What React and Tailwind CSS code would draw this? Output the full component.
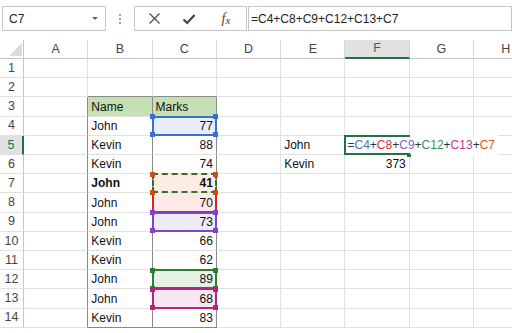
import React from "react";

const COLS = ["A", "B", "C", "D", "E", "F", "G", "H"];

const DATA = {
  3: ["Name", "Marks"],
  4: ["John", "77"],
  5: ["Kevin", "88"],
  6: ["Kevin", "74"],
  7: ["John", "41"],
  8: ["John", "70"],
  9: ["John", "73"],
  10: ["Kevin", "66"],
  11: ["Kevin", "62"],
  12: ["John", "89"],
  13: ["John", "68"],
  14: ["Kevin", "83"],
};

const REFS = {
  4: { fill: "bg-[#e8eef9]", border: "border-2 border-[#3b6fd2]", handle: "bg-[#3b6fd2]", z: "z-10" },
  7: { fill: "bg-[#fbede4]", border: "border-2 border-dashed border-[#3e6b2c]", handle: "bg-[#c4501a]", z: "z-30" },
  8: { fill: "bg-[#fce9e8]", border: "border-2 border-t-0 border-[#d42424]", handle: null, z: "z-10" },
  9: { fill: "bg-[#efeaf7]", border: "border-2 border-[#8044c8]", handle: "bg-[#8044c8]", z: "z-20" },
  12: { fill: "bg-[#e6f2e3]", border: "border-2 border-[#2e7d32]", handle: "bg-[#2e7d32]", z: "z-10" },
  13: { fill: "bg-[#f7e7f0]", border: "border-2 border-[#b3247c]", handle: "bg-[#b3247c]", z: "z-20" },
};

function Handles({ cls }) {
  return (
    <>
      <span className={`absolute -top-[3.5px] -left-[3.5px] w-[5px] h-[5px] ${cls}`} />
      <span className={`absolute -top-[3.5px] -right-[3.5px] w-[5px] h-[5px] ${cls}`} />
      <span className={`absolute -bottom-[3.5px] -left-[3.5px] w-[5px] h-[5px] ${cls}`} />
      <span className={`absolute -bottom-[3.5px] -right-[3.5px] w-[5px] h-[5px] ${cls}`} />
    </>
  );
}

function Formula() {
  return (
    <>
      <span className="text-[#333]">=</span>
      <span className="text-[#4472c4]">C4</span>
      <span className="text-[#333]">+</span>
      <span className="text-[#d6303c]">C8</span>
      <span className="text-[#333]">+</span>
      <span className="text-[#8e5cc8]">C9</span>
      <span className="text-[#333]">+</span>
      <span className="text-[#2f9455]">C12</span>
      <span className="text-[#333]">+</span>
      <span className="text-[#c2369a]">C13</span>
      <span className="text-[#333]">+</span>
      <span className="text-[#d9572b]">C7</span>
    </>
  );
}

function DataCell({ r, c }) {
  const inTableCols = c >= 1 && c <= 3;
  const rightDark = r >= 3 && r <= 14 && inTableCols;
  const bottomDark = (c === 2 || c === 3) && (r === 2 || r === 14);
  const rc = rightDark ? "border-r-[#8a8a8a]" : "border-r-[#e1e1e1]";
  const bc = bottomDark ? "border-b-[#8a8a8a]" : "border-b-[#e1e1e1]";

  let content = null;
  let align = "justify-start pl-[3px]";
  let extra = "";
  let overlay = null;
  let bold = r === 7 && (c === 2 || c === 3);

  if (DATA[r] && c === 2) content = DATA[r][0];
  if (DATA[r] && c === 3) {
    content = DATA[r][1];
    if (r !== 3) align = "justify-end pr-[3px]";
  }
  if (r === 3 && (c === 2 || c === 3)) extra = "bg-[#c6e0b4]";
  if (c === 3 && REFS[r]) {
    const ref = REFS[r];
    extra = ref.fill;
    overlay = (
      <div className={`absolute -top-[1px] -left-[1px] -right-[1px] -bottom-[1px] ${ref.border} ${ref.z}`}>
        {ref.handle && <Handles cls={ref.handle} />}
      </div>
    );
  }
  if (c === 5 && r === 5) content = "John";
  if (c === 5 && r === 6) content = "Kevin";
  if (c === 6 && r === 6) {
    content = "373";
    align = "justify-end pr-[3px]";
  }
  if (c === 6 && r === 5) {
    overlay = (
      <>
        <div className="absolute -top-[1px] -left-[1px] -bottom-[1px] w-[154px] bg-white z-30 flex items-center pl-[3px] whitespace-nowrap">
          <Formula />
        </div>
        <div className="absolute -top-[1px] -left-[1px] -right-[1px] -bottom-[1px] border-2 border-r-0 border-[#217346] z-40" />
        <span className="absolute -bottom-[3px] -right-[2px] w-[4px] h-[3px] bg-[#217346] z-40" />
      </>
    );
  }

  return (
    <div
      className={`relative border-r border-b ${rc} ${bc} ${extra} flex items-center ${align} whitespace-nowrap text-[12px] leading-none text-[#111] ${bold ? "font-bold" : ""}`}
    >
      {content}
      {overlay}
    </div>
  );
}

export default function App() {
  const rows = Array.from({ length: 14 }, (_, i) => i + 1);
  return (
    <div
      className="w-[512px] h-[333px] overflow-hidden bg-white"
      style={{ fontFamily: '"Liberation Sans", Arial, sans-serif' }}
    >
      {/* Formula bar */}
      <div className="h-[40px] flex items-start pt-[6px] pl-[2px]">
        <div className="w-[104px] h-[25px] border border-[#c6c6c6] flex items-center justify-between pl-[6px] pr-[7px] text-[12px] text-[#222]">
          <span>C7</span>
          <span className="w-0 h-0 border-l-[3px] border-r-[3px] border-t-[3px] border-l-transparent border-r-transparent border-t-[#666]" />
        </div>
        <div className="w-[28px] h-[25px] flex flex-col items-center justify-center gap-[2px]">
          <span className="w-[2px] h-[2px] bg-[#a0a0a0]" />
          <span className="w-[2px] h-[2px] bg-[#a0a0a0]" />
          <span className="w-[2px] h-[2px] bg-[#a0a0a0]" />
        </div>
        <div className="w-[113px] h-[25px] border border-[#c6c6c6] flex items-center">
          <div className="w-[36px] flex justify-center pl-[2px]">
            <svg width="13" height="13" viewBox="0 0 13 13">
              <path d="M1.5 1.5 L11.5 11.5 M11.5 1.5 L1.5 11.5" stroke="#555" strokeWidth="1.4" fill="none" />
            </svg>
          </div>
          <div className="w-[36px] flex justify-center">
            <svg width="14" height="12" viewBox="0 0 14 12">
              <path d="M1.5 6.5 L5.2 10 L12.5 2" stroke="#444" strokeWidth="2.2" fill="none" />
            </svg>
          </div>
          <div
            className="w-[38px] flex justify-center text-[14px] italic text-[#444] leading-none"
            style={{ fontFamily: '"Liberation Serif", "Times New Roman", serif' }}
          >
            f<span className="text-[11px] self-end">x</span>
          </div>
        </div>
        <div className="flex-1 h-[25px] border border-[#c6c6c6] ml-[1px] flex items-center pl-[2px] text-[12px] text-[#222] whitespace-nowrap">
          =C4+C8+C9+C12+C13+C7
        </div>
      </div>

      {/* Grid */}
      <div className="grid grid-cols-[24px_repeat(8,64.3px)] grid-rows-[19px_repeat(14,19.21px)] text-[#444]">
        <div className="relative border-r border-b border-r-[#c6c6c6] border-b-[#c6c6c6] bg-white">
          <svg className="absolute right-[1px] bottom-[2px]" width="13" height="13" viewBox="0 0 13 13">
            <polygon points="13,0 13,13 0,13" fill="#dcdcdc" />
          </svg>
        </div>
        {COLS.map((col) => (
          <div
            key={col}
            className={`flex items-center justify-center text-[12.5px] leading-none border-r border-r-[#d8d8d8] ${
              col === "F"
                ? "bg-[#e1e1e1] border-b-2 border-b-[#217346] text-[#217346]"
                : "bg-white border-b border-b-[#c6c6c6]"
            }`}
          >
            {col}
          </div>
        ))}
        {rows.map((r) => (
          <React.Fragment key={r}>
            <div
              className={`flex items-center justify-center text-[12.5px] leading-none border-b border-b-[#e1e1e1] ${
                r === 5
                  ? "bg-[#e1e1e1] border-r-2 border-r-[#217346] text-[#217346]"
                  : "bg-white border-r border-r-[#c6c6c6]"
              }`}
            >
              {r}
            </div>
            {COLS.map((_, ci) => (
              <DataCell key={ci} r={r} c={ci + 1} />
            ))}
          </React.Fragment>
        ))}
      </div>
    </div>
  );
}
